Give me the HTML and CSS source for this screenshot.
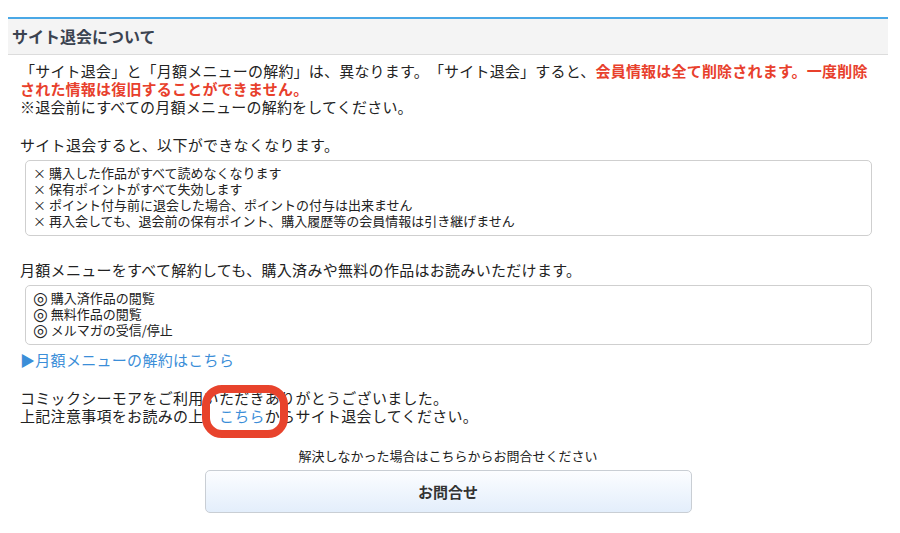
FILE: index.html
```html
<!DOCTYPE html>
<html lang="ja">
<head>
<meta charset="utf-8">
<title>サイト退会について</title>
<link rel="stylesheet" href="styles.css">
</head>
<body>
<div class="page">
  <h2 class="sec-title">サイト退会について</h2>
  <div class="content">
    <p class="lead">「サイト退会」と「月額メニューの解約」は、異なります。「サイト退会」すると、<strong class="warn">会員情報は全て削除されます。一度削除された情報は復旧することができません。</strong><br>※退会前にすべての月額メニューの解約をしてください。</p>

    <p class="label first">サイト退会すると、以下ができなくなります。</p>
    <ul class="notice">
      <li>× 購入した作品がすべて読めなくなります</li>
      <li>× 保有ポイントがすべて失効します</li>
      <li>× ポイント付与前に退会した場合、ポイントの付与は出来ません</li>
      <li>× 再入会しても、退会前の保有ポイント、購入履歴等の会員情報は引き継げません</li>
    </ul>

    <p class="label second">月額メニューをすべて解約しても、購入済みや無料の作品はお読みいただけます。</p>
    <ul class="notice">
      <li><span class="mark">◎</span> 購入済作品の閲覧</li>
      <li><span class="mark">◎</span> 無料作品の閲覧</li>
      <li><span class="mark">◎</span> メルマガの受信/停止</li>
    </ul>
    <a class="menu-link" href="#">▶月額メニューの解約はこちら</a>

    <p class="thanks">コミックシーモアをご利用いただきありがとうございました。<br>上記注意事項をお読みの上、<a class="inline-link" href="#">こちら</a>からサイト退会してください。<span class="highlight"></span></p>
  </div>
  <p class="help">解決しなかった場合はこちらからお問合せください</p>
  <div class="btn-wrap"><a class="btn" href="#">お問合せ</a></div>
</div>
</body>
</html>
```

FILE: styles.css
```css
* { box-sizing: border-box; }
html, body { margin: 0; padding: 0; background: #fff; }
body {
  font-family: "Noto Sans CJK JP", "Noto Sans", sans-serif;
  color: #222;
  padding: 17px 0 0 8px;
  text-spacing-trim: space-all;
}
.page { width: 880px; }
.sec-title {
  margin: 0;
  height: 38px;
  border-top: 2px solid #4aa8e6;
  border-bottom: 1px solid #dcdcdc;
  background: #f4f4f4;
  color: #3b4350;
  font-size: 16px;
  font-weight: bold;
  line-height: 35px;
  padding-left: 4px;
}
.content { padding: 0 16px 0 12px; }
.lead {
  margin: 7px 0 0;
  font-size: 15px;
  line-height: 18px;
  letter-spacing: 0.2px;
}
.warn { color: #e8402c; font-weight: bold; }
.label {
  margin: 0;
  font-size: 15px;
  line-height: 18px;
  letter-spacing: 0.3px;
}
.label.first { margin-top: 20px; }
.label.second { margin-top: 25px; }
.notice {
  list-style: none;
  margin: 6px 0 0 5px;
  padding: 4px 7px 6px;
  border: 1px solid #cfcfcf;
  border-radius: 5px;
  font-size: 13px;
  line-height: 16px;
  color: #222;
}
.mark {
  font-family: "DejaVu Sans", sans-serif;
  font-size: 17px;
  line-height: 0;
  vertical-align: -1px;
}
.menu-link {
  display: block;
  margin-top: 6px;
  color: #3b8ed8;
  font-size: 15px;
  line-height: 18px;
  letter-spacing: 0.3px;
  text-decoration: none;
}
.thanks {
  position: relative;
  margin: 20px 0 0;
  font-size: 15px;
  line-height: 18px;
  letter-spacing: 0.3px;
}
.inline-link { color: #3b8ed8; text-decoration: none; }
.highlight {
  position: absolute;
  left: 182px;
  top: -4px;
  width: 86px;
  height: 53px;
  border: 8px solid #e8432c;
  border-radius: 20px;
}
.help {
  margin: 22px 0 0;
  text-align: center;
  font-size: 13px;
  line-height: 18px;
}
.btn-wrap { display: flex; justify-content: center; margin-top: 5px; }
.btn {
  display: flex;
  align-items: center;
  justify-content: center;
  width: 487px;
  height: 43px;
  border: 1px solid #c9ced4;
  border-radius: 5px;
  background: linear-gradient(#fcfdff, #e3eefb);
  color: #333;
  font-size: 15px;
  font-weight: bold;
  text-decoration: none;
}
```
